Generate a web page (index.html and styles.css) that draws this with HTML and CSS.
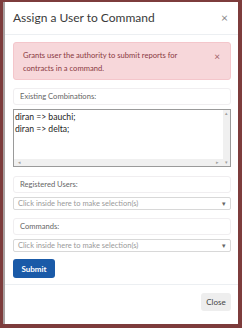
FILE: index.html
```html
<!DOCTYPE html>
<html lang="en">
<head>
    <meta charset="UTF-8">
    <title>Assign a User to Command</title>
    <link rel="stylesheet" href="styles.css">
</head>
<body>
    <div class="modal">
        <div class="modal-header">
            <h1 class="modal-title">Assign a User to Command</h1>
            <span class="close-x">&times;</span>
        </div>
        <div class="modal-body">
            <div class="alert">
                <p>Grants user the authority to submit reports for contracts in a command.</p>
                <span class="alert-x">&times;</span>
            </div>
            <div class="label-box">Existing Combinations:</div>
            <div class="combo-box">
                <div class="combo-text">diran =&gt; bauchi;<br>diran =&gt; delta;</div>
                <div class="vscroll">
                    <span class="arrow">&#9652;</span>
                    <span class="arrow">&#9662;</span>
                </div>
                <div class="hscroll">
                    <span class="arrow">&#9666;</span>
                    <span class="arrow">&#9656;</span>
                </div>
            </div>
            <div class="label-box">Registered Users:</div>
            <div class="select-box">
                <span>Click inside here to make selection(s)</span>
                <span class="caret">&#9662;</span>
            </div>
            <div class="label-box">Commands:</div>
            <div class="select-box">
                <span>Click inside here to make selection(s)</span>
                <span class="caret">&#9662;</span>
            </div>
            <button class="btn-submit">Submit</button>
        </div>
        <div class="modal-footer">
            <button class="btn-close">Close</button>
        </div>
    </div>
</body>
</html>
```

FILE: styles.css
```css
body {
    margin: 0;
    height: 328px;
    box-sizing: border-box;
    padding: 2px 4px 4px 3px;
    background-color: #7d3c3c; /* backdrop behind the modal */
    font-family: Lato, 'Open Sans', sans-serif;
    color: #333;
}
.modal {
    height: 100%;
    background-color: #fff;
    border-left: 2px solid #a8a0a0;
    display: flex;
    flex-direction: column;
}
.modal-header {
    height: 33px;
    display: flex;
    align-items: center;
    justify-content: space-between;
    padding: 0 10px 2px 8px;
    box-sizing: border-box;
    border-bottom: 1px solid #eceff2;
}
.modal-title {
    margin: 0;
    font-size: 12px;
    font-weight: 400;
    color: #3a3a3a;
}
.close-x {
    font-size: 12px;
    color: #888;
}
.modal-body {
    padding: 7px 7px 0 8px;
    display: flex;
    flex-direction: column;
}
.alert {
    height: 38px;
    box-sizing: border-box;
    background-color: #f7d7da;
    border: 1px solid #f4c6cb;
    border-radius: 3px;
    padding: 6px 10px 0 9px;
    display: flex;
    justify-content: space-between;
    margin-bottom: 8px;
}
.alert p {
    margin: 0;
    width: 170px;
    font-size: 7.6px;
    line-height: 13px;
    color: #8a3a42;
}
.alert-x {
    font-size: 10px;
    color: #a06068;
    margin-top: 1px;
}
.label-box {
    height: 17px;
    box-sizing: border-box;
    border: 1px solid #f0eef0;
    border-radius: 3px;
    padding-left: 6px;
    font-size: 7.6px;
    line-height: 15px;
    color: #666;
    margin-bottom: 4px;
}
.combo-box {
    height: 58px;
    box-sizing: border-box;
    border: 1px solid #9a9a9a;
    display: grid;
    grid-template-columns: 1fr 7px;
    grid-template-rows: 1fr 7px;
    margin-bottom: 9px;
}
.combo-text {
    padding: 1px 0 0 1px;
    font-size: 8.6px;
    line-height: 12px;
    color: #222;
}
.vscroll, .hscroll {
    background-color: #f0f0f0;
    display: flex;
    justify-content: space-between;
    align-items: center;
}
.vscroll {
    flex-direction: column;
    grid-row: 1 / 3;
    grid-column: 2;
}
.hscroll {
    grid-row: 2;
    grid-column: 1;
    padding: 0 4px;
}
.arrow {
    font-size: 5px;
    color: #a0a0a0;
    line-height: 7px;
}
.select-box {
    height: 13px;
    box-sizing: border-box;
    border: 1px solid #d8d8d8;
    border-radius: 2px;
    padding: 0 4px 0 4px;
    display: flex;
    justify-content: space-between;
    align-items: center;
    font-size: 7.5px;
    color: #9a9a9a;
    margin-bottom: 8px;
}
.caret {
    font-size: 7px;
    color: #666;
}
.btn-submit {
    align-self: flex-start;
    width: 42px;
    height: 19px;
    margin-top: -1px;
    border: 0;
    border-radius: 3px;
    background-color: #1a5aa8;
    color: #fff;
    font-family: inherit;
    font-size: 8px;
    font-weight: 700;
    padding: 0;
}
.modal-footer {
    margin-top: auto;
    height: 31px;
    border-top: 1px solid #eceff2;
    display: flex;
    justify-content: flex-end;
    align-items: flex-start;
    padding: 8px 7px 0 0;
}
.btn-close {
    width: 30px;
    height: 18px;
    border: 0;
    border-radius: 3px;
    background-color: #eeeeee;
    color: #444;
    font-family: inherit;
    font-size: 8px;
    padding: 0;
}
```
